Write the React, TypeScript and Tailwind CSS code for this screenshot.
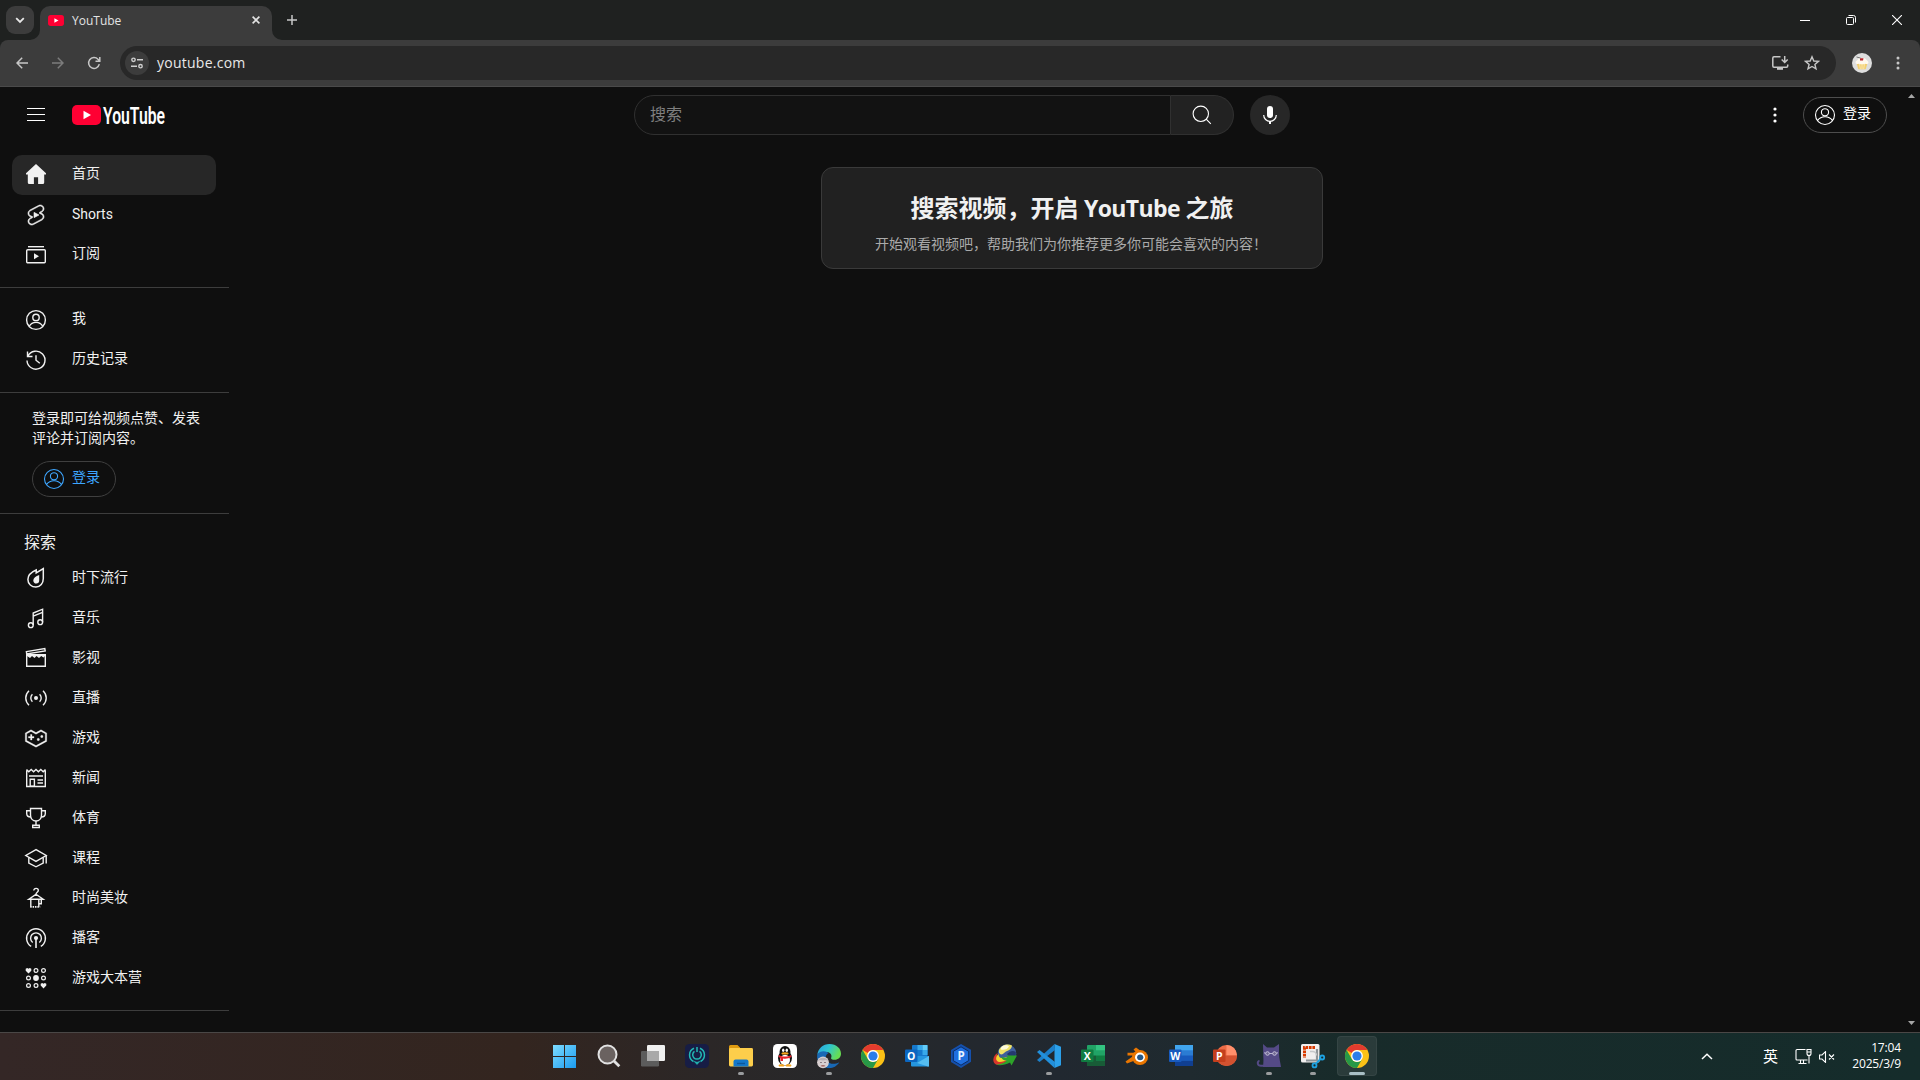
import React from "react";

type P = { children?: React.ReactNode; className?: string };

const CJK = "font-['Noto_Sans','Noto_Sans_CJK_SC',sans-serif]";

/* 24px outline icon */
function Ic({ children, className = "" }: P) {
  return (
    <svg viewBox="0 0 24 24" width="24" height="24" fill="none" stroke="currentColor" strokeWidth="1.4" className={"shrink-0 " + className}>
      {children}
    </svg>
  );
}

const user = (
  <>
    <circle cx="12" cy="12" r="9.4" />
    <circle cx="12" cy="9.4" r="3.2" />
    <path d="M5.2 18.4c1.4-2.6 4-4 6.8-4s5.4 1.400 6.800 4" />
  </>
);

const thinUser = (
  <g strokeWidth="1.1">
    <circle cx="12" cy="12" r="9.500" />
    <circle cx="12" cy="9.300" r="3.600" />
    <path d="M4.400 17.600c2-2.700 4.600-3.900 7.600-3.900s5.600 1.200 7.600 3.900" />
  </g>
);

const homeIcon = <path fill="currentColor" stroke="none" d="M12 1 2 10.300V11.500h1.800V19.500a1.500 1.500 0 0 0 1.500 1.500H9.900V14.300h4.200V21h4.600a1.500 1.500 0 0 0 1.500-1.500V11.500H22V10.300z" />;

const shortsIcon = (
  <path
    fill="currentColor"
    strokeWidth="0.6"
    d="M10 14.65v-5.3L15 12l-5 2.65zm7.77-4.33-1.2-.5L18 9.06c1.84-.96 2.53-3.23 1.56-5.06s-3.24-2.53-5.07-1.56L6 6.94c-1.29.68-2.07 2.04-2 3.49.07 1.42.93 2.67 2.22 3.25.03.01 1.2.5 1.2.5L6 14.93c-1.83.97-2.53 3.24-1.56 5.07.97 1.83 3.24 2.53 5.07 1.56l8.5-4.5c1.29-.68 2.06-2.04 1.99-3.49-.07-1.42-.94-2.68-2.23-3.25zm-.23 5.86-8.5 4.5c-1.34.71-3.01.2-3.72-1.14-.71-1.34-.2-3.01 1.14-3.72l2.04-1.08v-1.21l-.69-.28-1.11-.46c-.99-.41-1.65-1.35-1.7-2.41-.05-1.06.52-2.06 1.46-2.56l8.5-4.5c1.34-.71 3.01-.2 3.72 1.14.71 1.34.2 3.01-1.14 3.72L15.5 9.26v1.21l1.8.74c.99.41 1.65 1.35 1.7 2.41.05 1.06-.52 2.06-1.46 2.56z"
  />
);

const subsIcon = (
  <>
    <path d="M4 3.700h16" />
    <rect x="2.700" y="6.700" width="18.600" height="13" rx="1" />
    <path d="M10 10.200v6l5-3z" fill="currentColor" stroke="none" />
  </>
);

const historyIcon = (
  <>
    <path d="M3.500 3.500v5h5M3.900 8.200A9 9 0 1 1 3 12.500" />
    <path d="M12 7.200v5l3.800 3" />
  </>
);

const trendIcon = (
  <>
    <path strokeWidth="1.500" d="M19.300 2.500v10c0 4.800-3 8.600-7.400 8.600-4.300 0-8-2.900-8-7.600 0-4 3.100-7.300 8.300-9.500V7z" />
    <path d="M15.200 9c-3.400 1.200-5.900 3.200-5.900 5.500 0 2 1.400 3.100 3 3.100 1.900 0 2.900-1.300 2.900-3.100z" fill="currentColor" stroke="none" />
  </>
);

const musicIcon = (
  <>
    <circle cx="6.800" cy="19.200" r="2.400" />
    <circle cx="16.200" cy="16.200" r="2.400" />
    <path d="M9.200 19V7l9.400-3.800v13M9.200 10.200l9.400-3.800" />
  </>
);

const movieIcon = (
  <>
    <path d="M2.700 8.800h18.600v11.500H2.700z" />
    <path d="M2.400 5.600 20.800 2.600l.4 2.300L2.700 8z" />
    <path d="M3 8.500h18v1.500l-1.500 1.500-2.300-1.500L15 12l-2.500-2L10.500 12 8 10 6 12 3 10z" fill="currentColor" stroke="none" />
  </>
);

const liveIcon = (
  <g>
    <circle cx="12" cy="12" r="2" fill="currentColor" stroke="none" />
    <path d="M8.400 8.200a5.300 5.300 0 0 0 0 7.600M15.600 8.200a5.300 5.300 0 0 1 0 7.600M5 4.800c-4.300 4-4.300 10.400 0 14.400M19 4.800c4.300 4 4.300 10.400 0 14.400" />
  </g>
);

const gameIcon = (
  <path
    fill="currentColor"
    strokeWidth="0.3"
    d="M10 12H8v2H6.500v-2h-2v-1.500h2v-2H8v2h2zM15.500 13.500a1.200 1.200 0 1 1-2.400 0 1.200 1.200 0 0 1 2.400 0zM19 10.500a1.200 1.200 0 1 1-2.400 0 1.200 1.200 0 0 1 2.400 0zM17 3.800l-5 2.800-5-2.800-5.700 3.200v8.400L12 21.200l10.700-5.800V7zm-5 4.400L17 5.400l4.300 2.400v6.800L12 19.600l-9.300-5V7.800L7 5.400z"
  />
);

const newsIcon = (
  <>
    <path d="M2.700 4.500v16h18.600v-16M2.500 3.500l2.300 2.300 2.400-2.300 2.400 2.300L12 3.500l2.400 2.300 2.400-2.300 2.400 2.300 2.300-2.300" />
    <path d="M5 10h14M13.500 14h5.500M13.500 17h5.500" strokeWidth="1.700" />
    <path d="M6.200 13.200h4.200v7H6.200z" />
  </>
);

const trophyIcon = (
  <>
    <path d="M6.500 2.500h11v6.500c0 3.500-2.300 6-5.500 6s-5.500-2.500-5.500-6z" />
    <path d="M6.500 4.700H2.700v2.800c0 2 1.700 3.500 4 3.500M17.500 4.700h3.800v2.800c0 2-1.700 3.500-4 3.500M12 15v4M8.700 19.200h6.600v2.300H8.700z" />
  </>
);

const courseIcon = (
  <>
    <path d="M12 3.600 1.800 9.500 12 15.400l10.200-5.900z" />
    <path d="M4.800 11.500v5.500L12 20.800l7.200-3.800v-5.500M22.200 9.500v8" />
  </>
);

const fashionIcon = (
  <>
    <path d="M9.800 4.600c0-1.300 1-2.200 2.300-2.200s2.200.9 2.200 2.100c0 1.700-2.300 1.900-2.300 3.800L4.800 13.300h14.400L12 8.300" />
    <path d="M6.800 13.300v7.500M14.800 13.300v7.500M17.300 13.300v4.500h-2.500" />
    <path d="M6.200 20.800h10" strokeDasharray="1.500 .9" strokeWidth="1.800" />
  </>
);

const podcastIcon = (
  <>
    <path d="M7.200 20.300a9.400 9.400 0 1 1 9.600 0M8.700 16.500a5.400 5.400 0 1 1 6.600 0" />
    <circle cx="12" cy="12" r="2.100" fill="currentColor" stroke="none" />
    <path d="M12 12v10" strokeWidth="1.600" />
  </>
);

const playIcon = (
  <>
    {[
      [12, 4.500], [19.500, 4.500], [4.500, 12], [19.500, 12], [4.500, 19.500], [12, 19.500],
    ].map(([x, y]) => (
      <circle key={x + "-" + y} cx={x} cy={y} r="1.900" strokeWidth="1.200" />
    ))}
    <circle cx="12" cy="12" r="2.900" fill="currentColor" stroke="none" />
    <path d="M4.500 7.500 1.700 4.700V2.800L3.200 2l1.300.8L5.800 2l1.500.8v1.900zM19.500 22.400l-2.800-2.800v-1.900l1.500-.8 1.300.8 1.300-.8 1.500.8v1.900z" fill="currentColor" stroke="none" />
  </>
);

const explore: [string, React.ReactNode][] = [
  ["时下流行", trendIcon],
  ["音乐", musicIcon],
  ["影视", movieIcon],
  ["直播", liveIcon],
  ["游戏", gameIcon],
  ["新闻", newsIcon],
  ["体育", trophyIcon],
  ["课程", courseIcon],
  ["时尚美妆", fashionIcon],
  ["播客", podcastIcon],
  ["游戏大本营", playIcon],
];

function NavItem({ label, icon, active = false, lift = "-mt-1" }: { label: string; icon: React.ReactNode; active?: boolean; lift?: string }) {
  return (
    <div className={"mx-3 flex h-10 w-[204px] items-center gap-6 rounded-[10px] px-3 " + (active ? "bg-[#272727]" : "")}>
      <Ic>{icon}</Ic>
      <span className={"text-[14px] leading-5 font-[Roboto,'Noto_Sans_CJK_SC',sans-serif] " + lift}>{label}</span>
    </div>
  );
}

const Rule = () => <div className="my-3 h-px w-[229px] shrink-0 bg-[#3d3d3d]" />;

function YtMark({ className = "" }: P) {
  return (
    <svg viewBox="0 0 29 20" className={className}>
      <rect width="29" height="20" rx="5" fill="#ff0033" />
      <path d="M11.500 5.800v8.400L19 10z" fill="#fff" />
    </svg>
  );
}

function BrowserChrome() {
  return (
    <div className="flex h-[87px] shrink-0 flex-col bg-[#1f2120] text-[#e3e3e3]">
      <div className="flex h-10 items-end">
        <div className="mb-1.5 ml-1.5 flex size-7 items-center justify-center rounded-[9px] bg-[#3c3c3c]">
          <svg width="10" height="7" viewBox="0 0 10 7" fill="none" stroke="#e8e8e8" strokeWidth="1.800"><path d="M1.200 1.200 5 5l3.800-3.800" /></svg>
        </div>
        <svg width="10" height="10" viewBox="0 0 10 10" className="-ml-1"><path d="M10 0v10H0A10 10 0 0 0 10 0z" fill="#3c3c3c" /></svg>
        <div className="flex h-[34px] w-[232px] items-center rounded-t-[10px] bg-[#3c3c3c] pb-1.5">
          <YtMark className="ml-2 h-[11px] w-4" />
          <span className="mt-0.5 ml-2 font-['Open_Sans'] text-[12px] leading-4">YouTube</span>
          <svg width="8" height="8" viewBox="0 0 8 8" className="mr-3 ml-auto" stroke="#e3e3e3" strokeWidth="1.600"><path d="m.6.6 6.800 6.800M7.400.6.6 7.400" /></svg>
        </div>
        <svg width="10" height="10" viewBox="0 0 10 10"><path d="M0 0v10h10A10 10 0 0 1 0 0z" fill="#3c3c3c" /></svg>
        <svg width="10" height="10" viewBox="0 0 10 10" className="mb-[15px] ml-[5px]" stroke="#c7c7c7" strokeWidth="1.500"><path d="M5 0v10M0 5h10" /></svg>
        <div className="ml-auto flex h-10 items-center text-white">
          <div className="flex w-[46px] justify-center"><div className="h-px w-2.5 bg-white" /></div>
          <div className="flex w-[46px] justify-center">
            <svg width="10" height="10" viewBox="0 0 10 10" fill="none" stroke="#fff"><rect x=".5" y="2.500" width="7" height="7" rx="1" /><path d="M2.500.5H7.500a2 2 0 0 1 2 2V7.500" /></svg>
          </div>
          <div className="flex w-[46px] justify-center">
            <svg width="10" height="10" viewBox="0 0 10 10" stroke="#fff" strokeWidth="1.100"><path d="m0 0 10 10M10 0 0 10" /></svg>
          </div>
        </div>
      </div>
      <div className="flex h-[47px] items-center rounded-t-lg border-b border-[#4a4a4a] bg-[#3c3c3c]">
        <svg width="12" height="12" viewBox="0 0 12 12" className="ml-4" fill="none" stroke="#c7c7c7" strokeWidth="1.500"><path d="M12 6H1.200M6.200.8 1 6l5.200 5.200" /></svg>
        <svg width="12" height="12" viewBox="0 0 12 12" className="ml-6" fill="none" stroke="#7c7c7c" strokeWidth="1.500"><path d="M0 6h10.800M5.800.8 11 6l-5.200 5.200" /></svg>
        <svg width="14" height="14" viewBox="0 0 14 14" className="ml-[23px]" fill="none" stroke="#c7c7c7" strokeWidth="1.500"><path d="M12.300 8.200A5.400 5.400 0 1 1 11 3.300l1.600 1.600M12.800 1v4.300H8.500" /></svg>
        <div className="ml-[19px] flex h-[34px] w-[1716px] items-center rounded-full bg-[#282828] pl-[5px]">
          <div className="flex size-6 items-center justify-center rounded-full bg-[#3c3c3c]">
            <svg width="14" height="14" viewBox="0 0 14 14" fill="none" stroke="#d0d0d0" strokeWidth="1.400"><circle cx="3.500" cy="3.800" r="1.700" /><path d="M7 3.800h6M1 10.200h6" /><circle cx="10.500" cy="10.200" r="1.700" /></svg>
          </div>
          <span className="ml-2 font-['Open_Sans'] text-[14px] leading-5 tracking-[0.25px] text-[#e8e8e8]">youtube.com</span>
          <svg width="17" height="16" viewBox="0 0 17 16" className="ml-auto" fill="none" stroke="#c7c7c7" strokeWidth="1.500"><path d="M8.500 1.800H2A1.200 1.200 0 0 0 .8 3v8A1.200 1.200 0 0 0 2 12.200h12.500a1.200 1.200 0 0 0 1.200-1.200V9.500M12.700 1v6M9.700 4.500l3 3 3-3" /><path d="M5 12.500h6v2.300H5z" fill="#c7c7c7" stroke="none" /></svg>
          <svg width="16" height="16" viewBox="0 0 16 16" className="mr-4 ml-[15px]" fill="none" stroke="#c7c7c7" strokeWidth="1.400"><path d="m8 1.800 1.800 4.200 4.600.4-3.500 3 1.100 4.500L8 11.500l-4 2.400 1.100-4.500-3.500-3 4.600-.4z" /></svg>
        </div>
        <svg width="20" height="20" viewBox="0 0 20 20" className="ml-4">
          <circle cx="10" cy="10" r="10" fill="#dedede" />
          <path d="M4.500 10h11l-1.800 6.200H6.300z" fill="#f2cf70" />
          <path d="M7.500 10.500l.8 5.500M10 10.500V16M12.500 10.500l-.8 5.500" stroke="#fbe7ae" />
          <path d="M3.500 9.500c0-2 2-2 2.500-3.300C6.700 4.500 13 4.500 14 6.200c.6 1.300 2.500 1.500 2.500 3.300 0 1.800-2.500 1.600-3.300 1.200-1.500.8-5 .8-6.400 0-.8.4-3.300.6-3.300-1.200z" fill="#fff9ee" />
          <path d="M8 5.200h3.500l-.5 2.200H8z" fill="#b8232b" />
          <path d="M4.500 4l4 1" stroke="#777" />
        </svg>
        <svg width="4" height="14" viewBox="0 0 4 14" className="ml-6" fill="#c7c7c7"><circle cx="2" cy="2" r="1.500" /><circle cx="2" cy="7" r="1.500" /><circle cx="2" cy="12" r="1.500" /></svg>
      </div>
    </div>
  );
}

function Masthead() {
  return (
    <div className="flex h-14 shrink-0 items-center">
      <div className="flex w-[634px] items-center">
        <div className="-mt-px ml-[27px] flex w-[18px] flex-col gap-[5px]">
          <div className="h-px bg-white" /><div className="h-px bg-white" /><div className="h-px bg-white" />
        </div>
        <YtMark className="ml-[27px] h-5 w-[29px]" />
        <svg width="66" height="32" viewBox="0 0 66 32" className="ml-0.5 overflow-visible">
          <text x="0" y="24.500" textLength="62" lengthAdjust="spacingAndGlyphs" fontFamily="Roboto" fontWeight="600" fontSize="23" fill="#fff">YouTube</text>
        </svg>
      </div>
      <div className="flex h-10 w-[537px] items-center rounded-l-full border border-[#303030] bg-[#121212] pl-[15px]">
        <span className={"-mt-0.5 text-[16px] leading-6 text-[#7f7f7f] " + CJK}>搜索</span>
      </div>
      <div className="flex h-10 w-[63px] items-center justify-center rounded-r-full border border-l-0 border-[#303030] bg-[#222222]">
        <svg width="24" height="24" viewBox="0 0 24 24" fill="none" stroke="#fff" strokeWidth="1.100"><circle cx="10.800" cy="10.800" r="7.700" /><path d="m16.200 16.200 4.600 4.600" /></svg>
      </div>
      <div className="ml-4 flex size-10 items-center justify-center rounded-full bg-[#272727]">
        <svg width="24" height="24" viewBox="0 0 24 24" fill="none" stroke="#fff" strokeWidth="1.200"><rect x="9" y="3" width="6" height="12" rx="3" fill="#fff" stroke="none" /><path d="M5.700 12a6.300 6.300 0 0 0 12.600 0" /><path d="M12 18v3" strokeWidth="2" /></svg>
      </div>
      <svg width="4" height="16" viewBox="0 0 4 16" className="ml-auto mr-[26px]" fill="#fff"><circle cx="2" cy="2" r="1.600" /><circle cx="2" cy="8" r="1.600" /><circle cx="2" cy="14" r="1.600" /></svg>
      <div className="mr-4 flex h-9 w-[84px] items-center rounded-full border border-[#4d4d4d] pl-[9px] text-white">
        <Ic>{thinUser}</Ic>
        <span className={"-mt-1 ml-1.5 text-[14px] leading-5 whitespace-nowrap " + CJK}>登录</span>
      </div>
    </div>
  );
}

function Sidebar() {
  return (
    <div className="flex w-60 shrink-0 flex-col pt-3 text-[#f1f1f1]">
      <NavItem label="首页" icon={homeIcon} active />
      <NavItem label="Shorts" icon={shortsIcon} lift="-mt-0.5" />
      <NavItem label="订阅" icon={subsIcon} />
      <Rule />
      <NavItem label="我" icon={user} />
      <NavItem label="历史记录" icon={historyIcon} />
      <Rule />
      <div className={"ml-8 w-[176px] pt-[3px] text-[14px] leading-5 " + CJK}>登录即可给视频点赞、发表<br />评论并订阅内容。</div>
      <div className={"mt-[13px] mb-1 ml-8 flex h-9 w-[84px] items-center rounded-full border border-[#3f3f3f] pl-[9px] text-[#3ea6ff] " + CJK}>
        <Ic>{thinUser}</Ic>
        <span className="-mt-1 ml-1.5 text-[14px] leading-5 whitespace-nowrap">登录</span>
      </div>
      <Rule />
      <div className={"ml-6 flex h-8 items-center text-[16px] leading-6 " + CJK}>探索</div>
      {explore.map(([label, icon]) => (
        <NavItem key={label} label={label} icon={icon} lift="-mt-0.5" />
      ))}
      <Rule />
    </div>
  );
}

/* ---- taskbar drawings, all on a 24px grid ---- */
const chromeLogo = (
  <>
    <circle cx="12" cy="12" r="12" fill="#fbc116" />
    <path d="M1.600 6A12 12 0 0 1 22.400 6H12a6 6 0 0 0-5.200 3z" fill="#e33b2e" />
    <path d="M1.600 6A12 12 0 0 0 12 24l5.200-9A6 6 0 0 1 6.800 15z" fill="#279847" />
    <circle cx="12" cy="12" r="5.900" fill="#fff" />
    <circle cx="12" cy="12" r="4.600" fill="#2a7de9" />
  </>
);

function officeLogo(letter: string, badge: string) {
  return (
    <>
      <rect y="5.500" width="12.500" height="12.500" rx="1" fill={badge} />
      <text x="6.250" y="15.500" textAnchor="middle" fontFamily="Open Sans" fontWeight="700" fontSize="10.500" fill="#fff">{letter}</text>
    </>
  );
}

const apps: { name: string; art: React.ReactNode; dot?: boolean; active?: boolean }[] = [
  {
    name: "start",
    art: (
      <>
        <defs><linearGradient id="win" x1="0" y1="0" x2="1" y2="1"><stop stopColor="#7ddcff" /><stop offset="1" stopColor="#1b9bf0" /></linearGradient></defs>
        <path d="M0 1h11v11H0zM12 1h11v11H12zM0 13h11v11H0zM12 13h11v11H12z" fill="url(#win)" />
      </>
    ),
  },
  { name: "search", art: <g fill="none" stroke="#e2e2e2"><circle cx="10.500" cy="10.500" r="9" fill="#6a6260" strokeWidth="2" /><path d="m17 17 5.300 5.300" strokeWidth="2.800" /></g> },
  {
    name: "tasks",
    art: (
      <>
        <rect x="6" y="1" width="18" height="16" rx="1.200" fill="#f0f0f0" />
        <rect x="0" y="7" width="18" height="15.500" rx="1.200" fill="#5c5c5c" />
        <path d="M6 7h12v10H6z" fill="#a9a9a9" />
      </>
    ),
  },
  {
    name: "guard",
    art: (
      <>
        <rect width="24" height="24" rx="4.500" fill="#171d45" />
        <g fill="none" stroke="#23b9b5" strokeWidth="1.500"><path d="M9 4.300a7.300 7.300 0 0 0-.5 13.200M15 4.300a7.300 7.300 0 0 1 .5 13.200M9.500 7.300a4.300 4.300 0 1 0 5 0M12 3v5" /><path d="m9 17.300 3 3.200 3-3.200-3 1z" fill="#23b9b5" strokeWidth=".5" /></g>
      </>
    ),
  },
  {
    name: "files",
    dot: true,
    art: (
      <>
        <path d="M0 2.500A1.500 1.500 0 0 1 1.500 1h7L11 3.500v4H0z" fill="#e09b10" />
        <rect y="4" width="24" height="18.500" rx="1.400" fill="#fdce4b" />
        <path d="M4.500 22.500v-5a2 2 0 0 1 2-2h11a2 2 0 0 1 2 2v5z" fill="#1477c9" />
        <path d="M8 19.500h8" stroke="#0d579b" strokeWidth="1.400" />
      </>
    ),
  },
  {
    name: "penguin",
    art: (
      <>
        <rect width="24" height="24" rx="4.500" fill="#fff" />
        <ellipse cx="12" cy="14" rx="7" ry="7.500" fill="#111" />
        <ellipse cx="12" cy="8" rx="5.500" ry="6" fill="#111" />
        <ellipse cx="12" cy="16" rx="5" ry="5.300" fill="#fff" />
        <ellipse cx="10.200" cy="6.300" rx="1.200" ry="1.700" fill="#fff" /><ellipse cx="13.800" cy="6.300" rx="1.200" ry="1.700" fill="#fff" />
        <ellipse cx="12" cy="9.400" rx="3.600" ry="1.200" fill="#f6a41c" />
        <path d="M6 11c3 2 9 2 12 0l.5 2c-3 1.700-6 1.900-8.500 1.500V17H7.500v-3L5.500 13z" fill="#e5202b" />
        <ellipse cx="8.500" cy="21.400" rx="3" ry="1.200" fill="#f6a41c" /><ellipse cx="15.500" cy="21.400" rx="3" ry="1.200" fill="#f6a41c" />
      </>
    ),
  },
  {
    name: "edge",
    dot: true,
    art: (
      <>
        <defs><linearGradient id="edge" x1="0" y1="0" x2="1" y2=".4"><stop stopColor="#2a9fe0" /><stop offset=".5" stopColor="#2fc5d0" /><stop offset="1" stopColor="#66dd53" /></linearGradient></defs>
        <path d="M.3 11C1 4.500 6 0 12.500 0 19.500 0 24 4.500 24 9.800c0 3.800-3 6-6.200 6-2.700 0-4-1-3.700-1.900.8-1.200 1-5.400-4.600-5.900C5 7.700 1.500 9 .3 11z" fill="url(#edge)" />
        <path d="M.2 11C2.500 6.300 9.500 6.500 11.500 9.300 8.500 10.500 8 14 10 17c2.300 3.200 7.500 3.800 12.300 1.300C19.500 23 15 24.500 10.500 23.900 4 23-.7 17 .2 11z" fill="#1868b5" />
        <circle cx="6" cy="18.300" r="5.900" fill="#d8cfd0" />
        <path d="M1 17c1-4.500 9-4.500 10 0l-2-1-3 .6-3-.6z" fill="#b5afb4" />
        <path d="M3.500 22c1-1.200 4-1.200 5 0-1.500 1-3.500 1-5 0z" fill="#a8716d" />
        <path d="M3.200 18.500h1.600M7.200 18.500h1.600" stroke="#7d6c72" />
      </>
    ),
  },
  { name: "chrome", art: chromeLogo },
  {
    name: "outlook",
    art: (
      <>
        <rect x="7" y="1" width="15.500" height="13" rx="1" fill="#1679cc" />
        <path d="M12.500 1h5v5h-5zM17.500 6h5v5h-5z" fill="#38a9ea" /><path d="M17.500 1h5v5h-5z" fill="#63ccf8" />
        <path d="M6 12h18v9.500a1 1 0 0 1-1 1H7a1 1 0 0 1-1-1z" fill="#2596df" /><path d="m24 12-12 7 11 3.500h1z" fill="#55bdf0" />
        {officeLogo("O", "#0b66c0")}
      </>
    ),
  },
  {
    name: "pix",
    art: (
      <>
        <path d="M12 0 22 5.800v12L12 24 2 18V6z" fill="#1550ac" />
        <path d="M12 2.800 19.700 7.300v9.300L12 21.200l-7.700-4.500V7.300z" fill="#1f6fe0" stroke="#0c2c62" />
        <text x="12.200" y="16" textAnchor="middle" fontFamily="Open Sans" fontWeight="700" fontSize="11.500" fill="#eaf3ff">P</text>
      </>
    ),
  },
  {
    name: "download",
    art: (
      <>
        <circle cx="14" cy="9.500" r="9.300" fill="#3f5f9c" />
        <path d="M6 6c2-5 9-7 13-4.500 0 3-3 5-6 6-2 1-3 3-5 3-2-.5-2.500-2.500-2-4.500z" fill="#efe268" />
        <path d="M8 3.500c2-2.500 6-3 8-1-1 2.500-5 4-8 3z" fill="#fdfadb" />
        <path d="M14 10c3-3 6-4 8.800-2 .3 4-.5 7-3.300 9z" fill="#24386f" />
        <path d="M4.500 9C-.5 12-1 18.500 3 20.500c4 1.500 8-.5 11-2.500l-1-3C9 18 2.500 16.500 4.500 9z" fill="#d8372b" />
        <path d="M5.500 10c-3.500 3-3 7.500 1 8 3 0 6-1 8-2.500l-1-2.500c-4 2-8 1.500-8-3z" fill="#f2d62f" />
        <path d="M8 12.500c2 1.500 5 1.500 7 .5l-2-1.500 11 0-5.500 10-1.500-3C12 21 6 22 3 20.500c4 0 8-1.500 11-4-3 .5-5-1-6-4z" fill="#2da329" />
      </>
    ),
  },
  {
    name: "code",
    dot: true,
    art: (
      <>
        <path d="M17.500 0 24 2.800v18.400L17.500 24z" fill="#2ba0ea" />
        <path d="m17.500 0 .5 6L2.500 18 0 16z" fill="#1c7fc9" />
        <path d="M0 8l2.500-2L18 18l-.5 6z" fill="#2290dc" />
      </>
    ),
  },
  {
    name: "sheet",
    art: (
      <>
        <rect x="6" y="1" width="18" height="21" rx="1" fill="#21a366" /><path d="M15 1h9v5.300h-9z" fill="#33c481" />
        <path d="M6 11.500h9V22H6z" fill="#185c37" /><path d="M15 11.500h9v5.200h-9z" fill="#107c41" /><path d="M15 16.700h9V22h-9z" fill="#185c37" />
        {officeLogo("X", "#107c41")}
      </>
    ),
  },
  {
    name: "blend",
    art: (
      <g transform="translate(1 2)">
        <path d="M1 17.500-.5 15.500 8 9.500H1.500V6.700h9L7.500 3.500 10 1.500l9 6.500-9 6z" fill="#ea7600" />
        <ellipse cx="14" cy="11.500" rx="8" ry="7.400" fill="#ea7600" />
        <ellipse cx="14" cy="11.300" rx="5" ry="4.700" fill="#fff" />
        <ellipse cx="14.200" cy="11.300" rx="3.100" ry="2.900" fill="#265787" />
      </g>
    ),
  },
  {
    name: "word",
    art: (
      <>
        <rect x="6" y="1" width="18" height="21" rx="1" fill="#2b7cd3" /><path d="M6 1h18v5.300H6z" fill="#41a5ee" />
        <path d="M6 11.500h18v5.200H6z" fill="#185abd" /><path d="M6 16.700h18V22H6z" fill="#103f91" />
        {officeLogo("W", "#185abd")}
      </>
    ),
  },
  {
    name: "slides",
    art: (
      <>
        <circle cx="13.500" cy="11.500" r="10.500" fill="#ed6c47" /><path d="M13.500 1A10.500 10.500 0 0 1 24 11.500H13.500z" fill="#ff8f6b" />
        <path d="M3 11.500h21a10.500 10.500 0 0 1-21 0z" fill="#d35230" />
        {officeLogo("P", "#c43e1c")}
      </>
    ),
  },
  {
    name: "cat",
    dot: true,
    art: (
      <>
        <path d="m6 0 4 3.500h7L22 0v9.500c0 5 1.500 9 2 13.500H6c.5-5 .5-7 .3-10z" fill="#544a86" />
        <path d="M8 21.800H4C0 21.800 0 17 2.500 17" fill="none" stroke="#544a86" strokeWidth="2" />
        <g fill="#6d648f" stroke="#c9c6dc" strokeWidth=".9"><circle cx="10.500" cy="9.500" r="1.800" /><circle cx="17.500" cy="9.500" r="1.800" /><path d="M12.300 9.500h3.400M7 8.800l1.700.4M21 8.800l-1.700.4" /></g>
      </>
    ),
  },
  {
    name: "snip",
    dot: true,
    art: (
      <>
        <rect width="18.500" height="18.500" rx="1.500" fill="#f1efef" />
        <path d="M14 3.500H3.500V14" fill="none" stroke="#d83b01" strokeWidth="3" strokeDasharray="2.600 .8" />
        <path d="M16 5v11.500H5" fill="none" stroke="#8e9498" strokeWidth="2.200" /><path d="M9 7.500h2.500a4 4 0 0 1 4 4" fill="none" stroke="#c6c8ca" strokeWidth="1.500" />
        <g fill="none" stroke="#1da2e2" strokeWidth="1.800"><circle cx="21.200" cy="13.500" r="2" /><circle cx="13.500" cy="21.400" r="2" /><path d="m15 19.500 4.500-4.500" /></g>
      </>
    ),
  },
  { name: "chrome-active", active: true, art: chromeLogo },
];

function Taskbar() {
  return (
    <div className="flex h-12 shrink-0 items-stretch border-t border-[#4a4746] bg-[linear-gradient(90deg,#342726_0%,#33251f_27%,#2b2727_37%,#26282b_45%,#212830_55%,#1f2a2f_62%,#182b2a_70%,#152c2b_100%)]">
      <div className="ml-[543px] flex">
        {apps.map((a) => (
          <div key={a.name} className={"relative mt-[3px] flex h-10 items-center justify-center " + (a.active ? "mx-0.5 w-10 rounded-[4px] border border-white/5 bg-white/8" : "w-11")}>
            <svg width="24" height="24" viewBox="0 0 24 24" className="overflow-visible">{a.art}</svg>
            {a.dot && <span className="absolute bottom-[1px] h-[3px] w-1.5 rounded-full bg-[#9a9c9e]" />}
            {a.active && <span className="absolute bottom-0 h-[3px] w-4 rounded-full bg-[#a9bfc5]" />}
          </div>
        ))}
      </div>
      <div className="ml-auto flex items-center text-white">
        <svg width="12" height="7" viewBox="0 0 12 7" fill="none" stroke="#fff" strokeWidth="1.500" className="mr-[50px]"><path d="m1 6 5-4.800L11 6" /></svg>
        <span className={"-mt-0.5 mr-4 w-4 text-[15px] leading-5 whitespace-nowrap " + CJK}>英</span>
        <svg width="17" height="17" viewBox="0 0 17 17" fill="none" stroke="#fff" strokeWidth="1.100" className="mr-[7px]"><path d="M10.500 1.500H2a1 1 0 0 0-1 1V11a1 1 0 0 0 1 1h10.500M5.500 12v3M8.500 12v3M3.500 15.500h8M14 7.500v8M12 1.500h4v4a2 2 0 0 1-4 0zM12 4h4" /></svg>
        <svg width="16" height="12" viewBox="0 0 16 12" fill="none" stroke="#fff" strokeWidth="1.100" className="mr-[17px]"><path d="M.5 4v4H3l3.500 3.300V.7L3 4zM10 3.500l5 5M15 3.500l-5 5" /></svg>
        <div className="-mt-px mr-[19px] flex w-[49px] flex-col items-end font-['Open_Sans'] text-[12px] leading-4 tracking-[-0.15px] whitespace-nowrap">
          <span>17:04</span>
          <span>2025/3/9</span>
        </div>
      </div>
    </div>
  );
}

export default function App() {
  return (
    <div className="flex h-[1080px] w-[1920px] flex-col overflow-hidden bg-[#0f0f0f]">
      <BrowserChrome />
      <div className="flex min-h-0 flex-1">
        <div className="flex min-w-0 flex-1 flex-col">
          <Masthead />
          <div className="flex min-h-0 flex-1">
            <Sidebar />
            <div className="flex flex-1 justify-center pt-6 pl-px">
              <div className={"flex h-[102px] w-[502px] flex-col items-center rounded-xl border border-[#3a3a3a] bg-[#212121] pt-[22px] " + CJK}>
                <div className="text-[24px] leading-9 font-bold whitespace-nowrap text-[#f1f1f1]">
                  搜索视频，开启<span className="font-['Open_Sans'] text-[23px] tracking-[-0.6px]"> YouTube </span>之旅
                </div>
                <div className="mt-2 pr-0.5 text-[14px] leading-5 whitespace-nowrap text-[#aaaaaa]">开始观看视频吧，帮助我们为你推荐更多你可能会喜欢的内容！</div>
              </div>
            </div>
          </div>
        </div>
        <div className="flex w-[17px] shrink-0 flex-col items-center justify-between pt-[7px] pb-[7px]">
          <svg width="7" height="4" viewBox="0 0 7 4" fill="#a6a6a6"><path d="M0 4 3.500 0 7 4z" /></svg>
          <svg width="7" height="4" viewBox="0 0 7 4" fill="#a6a6a6"><path d="m0 0 3.500 4L7 0z" /></svg>
        </div>
      </div>
      <Taskbar />
    </div>
  );
}
